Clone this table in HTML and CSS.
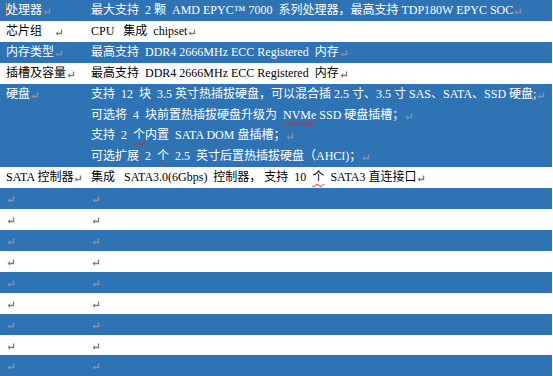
FILE: index.html
```html
<!DOCTYPE html>
<html lang="zh-CN">
<head>
<meta charset="utf-8">
<title>规格</title>
<link rel="stylesheet" href="styles.css">
</head>
<body>
<table class="spec">
  <colgroup><col class="c1"><col class="c2"></colgroup>
  <tr>
    <td><span class="caret"></span>处理器<svg class="pm" viewBox="0 0 8 7"><path d="M6.5 0.5V4.5H2"/><path class="h" d="M0.5 4.5L3 2.3V6.7Z"/></svg></td>
    <td>最大支持&ensp;2 颗&ensp;AMD EPYC™ 7000&ensp;系列处理器，最高支持 TDP180W EPYC SOC<svg class="pm" viewBox="0 0 8 7"><path d="M6.5 0.5V4.5H2"/><path class="h" d="M0.5 4.5L3 2.3V6.7Z"/></svg></td>
  </tr>
  <tr>
    <td>芯片组&nbsp;&nbsp;&nbsp;&nbsp;<svg class="pm" viewBox="0 0 8 7"><path d="M6.5 0.5V4.5H2"/><path class="h" d="M0.5 4.5L3 2.3V6.7Z"/></svg></td>
    <td>CPU&ensp; 集成&ensp;chipset<svg class="pm" viewBox="0 0 8 7"><path d="M6.5 0.5V4.5H2"/><path class="h" d="M0.5 4.5L3 2.3V6.7Z"/></svg></td>
  </tr>
  <tr>
    <td>内存类型<svg class="pm" viewBox="0 0 8 7"><path d="M6.5 0.5V4.5H2"/><path class="h" d="M0.5 4.5L3 2.3V6.7Z"/></svg></td>
    <td>最高支持&ensp;DDR4 2666MHz ECC Registered&ensp;内存<svg class="pm" viewBox="0 0 8 7"><path d="M6.5 0.5V4.5H2"/><path class="h" d="M0.5 4.5L3 2.3V6.7Z"/></svg></td>
  </tr>
  <tr>
    <td>插槽及容量<svg class="pm" viewBox="0 0 8 7"><path d="M6.5 0.5V4.5H2"/><path class="h" d="M0.5 4.5L3 2.3V6.7Z"/></svg></td>
    <td>最高支持&ensp;DDR4 2666MHz ECC Registered&ensp;内存<svg class="pm" viewBox="0 0 8 7"><path d="M6.5 0.5V4.5H2"/><path class="h" d="M0.5 4.5L3 2.3V6.7Z"/></svg></td>
  </tr>
  <tr>
    <td>硬盘<svg class="pm" viewBox="0 0 8 7"><path d="M6.5 0.5V4.5H2"/><path class="h" d="M0.5 4.5L3 2.3V6.7Z"/></svg></td>
    <td>
      <div class="ln">支持&ensp;12&ensp;块&ensp;3.5 英寸热插拔硬盘，可以混合插 2.5 寸、3.5 寸 SAS、SATA、SSD 硬盘;<svg class="pm" viewBox="0 0 8 7"><path d="M6.5 0.5V4.5H2"/><path class="h" d="M0.5 4.5L3 2.3V6.7Z"/></svg></div>
      <div class="ln">可选将&ensp;4&ensp;块前置热插拔硬盘升级为&ensp;<span class="sp">NVMe</span> SSD 硬盘插槽；<svg class="pm" viewBox="0 0 8 7"><path d="M6.5 0.5V4.5H2"/><path class="h" d="M0.5 4.5L3 2.3V6.7Z"/></svg></div>
      <div class="ln">支持&ensp;2&ensp;<span class="sp">个</span>内置&ensp;SATA DOM 盘插槽；<svg class="pm" viewBox="0 0 8 7"><path d="M6.5 0.5V4.5H2"/><path class="h" d="M0.5 4.5L3 2.3V6.7Z"/></svg></div>
      <div class="ln">可选扩展&ensp;2&ensp;<span class="sp">个</span>&ensp;2.5&ensp;英寸后置热插拔硬盘（AHCI)；<svg class="pm" viewBox="0 0 8 7"><path d="M6.5 0.5V4.5H2"/><path class="h" d="M0.5 4.5L3 2.3V6.7Z"/></svg></div>
    </td>
  </tr>
  <tr>
    <td>SATA 控制器<svg class="pm" viewBox="0 0 8 7"><path d="M6.5 0.5V4.5H2"/><path class="h" d="M0.5 4.5L3 2.3V6.7Z"/></svg></td>
    <td>集成&ensp; SATA3.0(6Gbps)&ensp;控制器， 支持&ensp;10&ensp;<span class="sp">个</span>&ensp;SATA3 直连接口<svg class="pm" viewBox="0 0 8 7"><path d="M6.5 0.5V4.5H2"/><path class="h" d="M0.5 4.5L3 2.3V6.7Z"/></svg></td>
  </tr>
  <tr class="empty"><td><svg class="pm" viewBox="0 0 8 7"><path d="M6.5 0.5V4.5H2"/><path class="h" d="M0.5 4.5L3 2.3V6.7Z"/></svg></td><td><svg class="pm" viewBox="0 0 8 7"><path d="M6.5 0.5V4.5H2"/><path class="h" d="M0.5 4.5L3 2.3V6.7Z"/></svg></td></tr>
  <tr class="empty"><td><svg class="pm" viewBox="0 0 8 7"><path d="M6.5 0.5V4.5H2"/><path class="h" d="M0.5 4.5L3 2.3V6.7Z"/></svg></td><td><svg class="pm" viewBox="0 0 8 7"><path d="M6.5 0.5V4.5H2"/><path class="h" d="M0.5 4.5L3 2.3V6.7Z"/></svg></td></tr>
  <tr class="empty"><td><svg class="pm" viewBox="0 0 8 7"><path d="M6.5 0.5V4.5H2"/><path class="h" d="M0.5 4.5L3 2.3V6.7Z"/></svg></td><td><svg class="pm" viewBox="0 0 8 7"><path d="M6.5 0.5V4.5H2"/><path class="h" d="M0.5 4.5L3 2.3V6.7Z"/></svg></td></tr>
  <tr class="empty"><td><svg class="pm" viewBox="0 0 8 7"><path d="M6.5 0.5V4.5H2"/><path class="h" d="M0.5 4.5L3 2.3V6.7Z"/></svg></td><td><svg class="pm" viewBox="0 0 8 7"><path d="M6.5 0.5V4.5H2"/><path class="h" d="M0.5 4.5L3 2.3V6.7Z"/></svg></td></tr>
  <tr class="empty"><td><svg class="pm" viewBox="0 0 8 7"><path d="M6.5 0.5V4.5H2"/><path class="h" d="M0.5 4.5L3 2.3V6.7Z"/></svg></td><td><svg class="pm" viewBox="0 0 8 7"><path d="M6.5 0.5V4.5H2"/><path class="h" d="M0.5 4.5L3 2.3V6.7Z"/></svg></td></tr>
  <tr class="empty"><td><svg class="pm" viewBox="0 0 8 7"><path d="M6.5 0.5V4.5H2"/><path class="h" d="M0.5 4.5L3 2.3V6.7Z"/></svg></td><td><svg class="pm" viewBox="0 0 8 7"><path d="M6.5 0.5V4.5H2"/><path class="h" d="M0.5 4.5L3 2.3V6.7Z"/></svg></td></tr>
  <tr class="empty"><td><svg class="pm" viewBox="0 0 8 7"><path d="M6.5 0.5V4.5H2"/><path class="h" d="M0.5 4.5L3 2.3V6.7Z"/></svg></td><td><svg class="pm" viewBox="0 0 8 7"><path d="M6.5 0.5V4.5H2"/><path class="h" d="M0.5 4.5L3 2.3V6.7Z"/></svg></td></tr>
  <tr class="empty"><td><svg class="pm" viewBox="0 0 8 7"><path d="M6.5 0.5V4.5H2"/><path class="h" d="M0.5 4.5L3 2.3V6.7Z"/></svg></td><td><svg class="pm" viewBox="0 0 8 7"><path d="M6.5 0.5V4.5H2"/><path class="h" d="M0.5 4.5L3 2.3V6.7Z"/></svg></td></tr>
  <tr class="empty"><td><svg class="pm" viewBox="0 0 8 7"><path d="M6.5 0.5V4.5H2"/><path class="h" d="M0.5 4.5L3 2.3V6.7Z"/></svg></td><td><svg class="pm" viewBox="0 0 8 7"><path d="M6.5 0.5V4.5H2"/><path class="h" d="M0.5 4.5L3 2.3V6.7Z"/></svg></td></tr>
</table>
</body>
</html>
```
FILE: styles.css
```css
html, body {
  margin: 0;
  padding: 0;
  background: #ffffff;
  overflow: hidden;
}
.spec {
  width: 552px;
  border-collapse: collapse;
  border-spacing: 0;
  table-layout: fixed;
  font-family: "Liberation Serif", "Noto Sans CJK SC", serif;
  font-size: 12px;
  line-height: 20.9px;
  color: #000000;
}
.c1 { width: 85px; }
.c2 { width: 467px; }
.spec td {
  padding: 0 0 0 6px;
  vertical-align: top;
  white-space: nowrap;
  overflow: visible;
}
.spec tr:nth-child(odd) {
  background: #2e74b5;
  color: #ffffff;
}
.pm {
  display: inline-block;
  width: 8px;
  height: 7px;
  margin-left: 1px;
  vertical-align: -1px;
  fill: none;
  stroke: #808080;
  stroke-width: 1.4;
}
.pm .h {
  fill: #808080;
  stroke: none;
}
.spec tr:nth-child(odd) .pm { stroke: #8491a4; }
.spec tr:nth-child(odd) .pm .h { fill: #8491a4; stroke: none; }
.caret {
  display: inline-block;
  width: 1px;
  height: 13px;
  margin-right: -1px;
  vertical-align: -2px;
  background: #e8912f;
}
.sp {
  text-decoration: underline wavy #e02020;
  text-decoration-thickness: 1px;
  text-underline-offset: 2px;
}
```
